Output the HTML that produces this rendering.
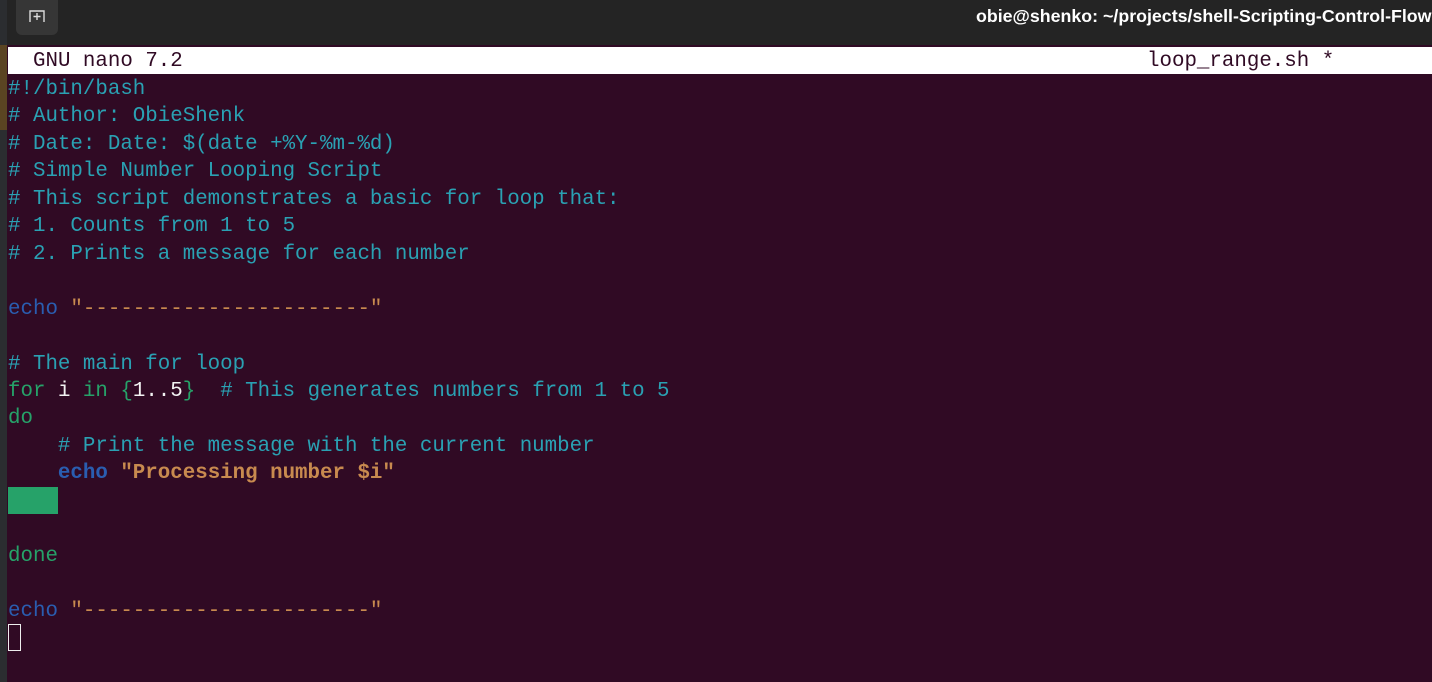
<!DOCTYPE html>
<html><head><meta charset="utf-8"><style>
html,body{margin:0;padding:0;width:1432px;height:682px;overflow:hidden;background:#300a24;}
#strip{position:absolute;left:0;top:0;width:7px;height:682px;background:#2b2d30;}
#strip .b{position:absolute;left:0;top:45px;width:7px;height:85px;background:#5a4422;}
#title{position:absolute;left:7px;top:0;width:1425px;height:45px;background:#242424;}
#btn{position:absolute;left:16px;top:0;width:42px;height:35px;background:#363636;border-radius:0 0 6px 6px;}
#ttext{position:absolute;left:976px;top:6px;color:#fff;font:bold 17.8px "Liberation Sans",sans-serif;white-space:nowrap;}
#term{position:absolute;left:7px;top:45px;width:1425px;height:637px;background:#300a24;}
#hdr{position:absolute;left:8px;top:47px;width:1424px;height:27px;background:#fff;}
.t{position:absolute;font-family:"Liberation Mono",monospace;font-size:20.8px;line-height:27.45px;white-space:pre;}
.c{color:#2aa1b3}.e{color:#2a5db0}.s{color:#c88a4f}.g{color:#26a269}.w{color:#f2f2f2}.k{color:#300a24}
</style></head><body>
<div id="strip"><div class="b"></div></div>
<div id="title"></div>
<div id="btn"><svg width="42" height="35" viewBox="0 0 42 35"><path d="M14 22 V11 H28 V22 M21 13 V20 M17.5 16.5 H24.5" stroke="#ddd" stroke-width="1.4" fill="none"/></svg></div>
<div id="ttext">obie@shenko: ~/projects/shell-Scripting-Control-Flow</div>
<div id="term"></div>
<div id="hdr"></div>
<div class="t k" style="left:33px;top:48px;line-height:27px">GNU nano 7.2</div>
<div class="t k" style="left:1147px;top:48px;line-height:27px">loop_range.sh *</div>
<div style="position:absolute;left:8px;top:487px;width:50px;height:27px;background:#26a269"></div>
<div style="position:absolute;left:8px;top:624px;width:13px;height:27px;border:1.5px solid #eee;box-sizing:border-box"></div>
<div class="t" style="left:8px;top:76px"><span class="c">#!/bin/bash
# Author: ObieShenk
# Date: Date: $(date +%Y-%m-%d)
# Simple Number Looping Script
# This script demonstrates a basic for loop that:
# 1. Counts from 1 to 5
# 2. Prints a message for each number</span>

<span class="e">echo</span> <span class="s">"-----------------------"</span>

<span class="c"># The main for loop</span>
<span class="g">for</span> <span class="w">i</span> <span class="g">in</span> <span class="g">{</span><span class="w">1..5</span><span class="g">}</span>  <span class="c"># This generates numbers from 1 to 5</span>
<span class="g">do</span>
    <span class="c"># Print the message with the current number</span>
    <span class="e" style="font-weight:bold">echo</span> <span class="s" style="font-weight:bold">"Processing number $i"</span>


<span class="g">done</span>

<span class="e">echo</span> <span class="s">"-----------------------"</span></div>
</body></html>
